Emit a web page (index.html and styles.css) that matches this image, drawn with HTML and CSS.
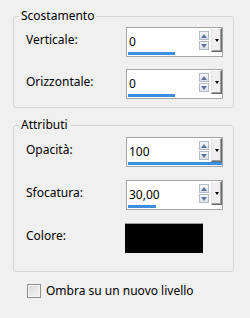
FILE: index.html
```html
<!DOCTYPE html>
<html lang="it">
<head>
    <meta charset="UTF-8">
    <title>Ombra</title>
    <link rel="stylesheet" href="styles.css">
</head>
<body>
    <div class="dialog">
        <fieldset class="group">
            <legend>Scostamento</legend>
            <div class="rows">
                <div class="row">
                    <label class="row-label">Verticale:</label>
                    <div class="spin">
                        <div class="spin-top">
                            <span class="spin-value">0</span>
                            <div class="spin-arrows">
                                <span class="arrow-btn"><span class="arrow up"></span></span>
                                <span class="arrow-btn"><span class="arrow down"></span></span>
                            </div>
                            <span class="spin-drop"><span class="drop-tri"></span></span>
                        </div>
                        <div class="spin-track"><div class="spin-fill" style="width: 50%"></div></div>
                    </div>
                </div>
                <div class="row">
                    <label class="row-label">Orizzontale:</label>
                    <div class="spin">
                        <div class="spin-top">
                            <span class="spin-value">0</span>
                            <div class="spin-arrows">
                                <span class="arrow-btn"><span class="arrow up"></span></span>
                                <span class="arrow-btn"><span class="arrow down"></span></span>
                            </div>
                            <span class="spin-drop"><span class="drop-tri"></span></span>
                        </div>
                        <div class="spin-track"><div class="spin-fill" style="width: 50%"></div></div>
                    </div>
                </div>
            </div>
        </fieldset>

        <fieldset class="group group-attr">
            <legend>Attributi</legend>
            <div class="rows rows-attr">
                <div class="row">
                    <label class="row-label">Opacità:</label>
                    <div class="spin">
                        <div class="spin-top">
                            <span class="spin-value">100</span>
                            <div class="spin-arrows">
                                <span class="arrow-btn"><span class="arrow up"></span></span>
                                <span class="arrow-btn"><span class="arrow down"></span></span>
                            </div>
                            <span class="spin-drop"><span class="drop-tri"></span></span>
                        </div>
                        <div class="spin-track"><div class="spin-fill" style="width: 100%"></div></div>
                    </div>
                </div>
                <div class="row">
                    <label class="row-label">Sfocatura:</label>
                    <div class="spin">
                        <div class="spin-top">
                            <span class="spin-value">30,00</span>
                            <div class="spin-arrows">
                                <span class="arrow-btn"><span class="arrow up"></span></span>
                                <span class="arrow-btn"><span class="arrow down"></span></span>
                            </div>
                            <span class="spin-drop"><span class="drop-tri"></span></span>
                        </div>
                        <div class="spin-track"><div class="spin-fill" style="width: 30%"></div></div>
                    </div>
                </div>
                <div class="row">
                    <label class="row-label">Colore:</label>
                    <div class="swatch"></div>
                </div>
            </div>
        </fieldset>

        <label class="check">
            <span class="check-box"></span>
            <span>Ombra su un nuovo livello</span>
        </label>
    </div>
</body>
</html>
```

FILE: styles.css
```css
body {
    margin: 0;
    padding: 8px 0 0 13px;
    background-color: #f0f0f0;
    font-family: 'Noto Sans', 'Open Sans', sans-serif;
    font-size: 12px;
    color: #000;
}
.dialog {
    width: 221px;
}
.group {
    box-sizing: border-box;
    width: 221px;
    margin: 0;
    padding: 3px 10px 8px 12px;
    border: 1px solid #d5d5d5;
    border-radius: 3px;
    min-width: 0;
}
.group legend {
    margin-left: -7px;
    padding: 0 2px;
    line-height: 16px;
}
.group-attr {
    margin-top: 9px;
    padding-top: 4px;
    padding-bottom: 18px;
}
.rows {
    display: flex;
    flex-direction: column;
    gap: 12px;
}
.rows-attr {
    gap: 13px;
}
.row {
    display: grid;
    grid-template-columns: 1fr 97px;
    align-items: start;
    height: 30px;
}
.row-label {
    margin-top: 5px;
    line-height: 16px;
}
/* spin box */
.spin {
    box-sizing: border-box;
    height: 30px;
    border: 1px solid #a6a6a6;
    background-color: #fff;
    display: flex;
    flex-direction: column;
}
.spin-top {
    display: flex;
    height: 24px;
}
.spin-value {
    flex: 1;
    padding: 6px 0 0 2px;
    line-height: 16px;
}
.spin-arrows {
    width: 10px;
    margin: 3px 2px 0 0;
    display: flex;
    flex-direction: column;
    gap: 1px;
}
.arrow-btn {
    box-sizing: border-box;
    height: 9px;
    border: 1px solid #b4bac6;
    background: linear-gradient(#f6f7f9, #dde1e8);
    display: flex;
    align-items: center;
    justify-content: center;
}
.arrow {
    width: 0;
    height: 0;
    border-left: 3px solid transparent;
    border-right: 3px solid transparent;
}
.arrow.up {
    border-bottom: 4px solid #6074a3;
}
.arrow.down {
    border-top: 4px solid #6074a3;
}
.spin-drop {
    box-sizing: border-box;
    width: 11px;
    height: 24px;
    background-color: #f0f0f0;
    border: 1px solid;
    border-color: #fff #696969 #696969 #e3e3e3;
    box-shadow: inset -1px -1px 0 #a0a0a0;
    display: flex;
    align-items: center;
    justify-content: center;
}
.drop-tri {
    width: 0;
    height: 0;
    border-left: 2px solid transparent;
    border-right: 2px solid transparent;
    border-top: 3px solid #000;
}
.spin-track {
    height: 3px;
    margin: 0 0 1px 1px;
}
.spin-fill {
    height: 3px;
    background-color: #3d8de0;
}
.swatch {
    box-sizing: border-box;
    width: 78px;
    height: 30px;
    margin-left: -1px;
    background-color: #000;
    border-top: 1px solid #9c9c9c;
}
/* checkbox */
.check {
    display: flex;
    align-items: center;
    gap: 5px;
    margin: 11px 0 0 14px;
    line-height: 16px;
}
.check-box {
    box-sizing: border-box;
    width: 14px;
    height: 14px;
    border: 1px solid #8f8f8f;
    background: linear-gradient(135deg, #d8d8d8, #f7f7f7);
    box-shadow: inset 0 0 0 1px #f4f4f4;
}
```
